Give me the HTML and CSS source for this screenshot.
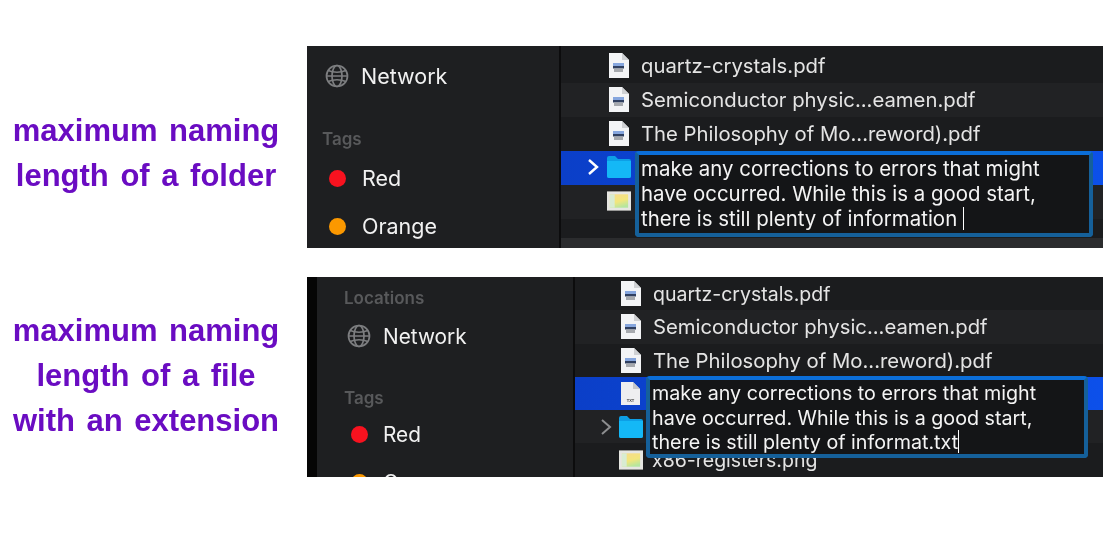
FILE: index.html
```html
<!DOCTYPE html>
<html>
<head>
	<meta charset="UTF-8">
	<title>Maximum naming length</title>
	<link rel="stylesheet" href="styles.css">
</head>
<body>
	<svg class="defs" width="0" height="0">
		<defs>
			<linearGradient id="picture" x1="0.2" y1="0" x2="0.6" y2="1">
				<stop offset="0" stop-color="#f6dc8a"/>
				<stop offset="0.55" stop-color="#f2e67c"/>
				<stop offset="1" stop-color="#b4e6a0"/>
			</linearGradient>
		</defs>
		<symbol id="pdf" viewBox="0 0 21 25">
			<path d="M1 0H14L21 7V25H1Z" fill="#f3f4f6"/>
			<path d="M14 0L21 7H14Z" fill="#cfd1d4"/>
			<rect x="5" y="10" width="11" height="3" fill="#86a6de"/>
			<rect x="5" y="13" width="11" height="2.5" fill="#2f3f60"/>
			<rect x="6" y="15.5" width="9" height="3.5" fill="#a6a9ae"/>
		</symbol>
		<symbol id="folder" viewBox="0 0 24 22">
			<path d="M0 2Q0 0 2 0H8L11 3H22Q24 3 24 5V20Q24 22 22 22H2Q0 22 0 20Z" fill="#0d9fe6"/>
			<path d="M0 5H24V20Q24 22 22 22H2Q0 22 0 20Z" fill="#14b8f6"/>
		</symbol>
		<symbol id="image" viewBox="0 0 25 20">
			<rect width="25" height="20" fill="#e6e6e2"/>
			<rect x="3" y="3" width="19" height="14" fill="url(#picture)"/>
			<rect x="3" y="3" width="5" height="14" fill="#d8ecd2"/>
		</symbol>
		<symbol id="globe" viewBox="0 0 24 24">
			<g fill="none" stroke="#7d7e80" stroke-width="1.7">
				<circle cx="12" cy="12" r="10.5"/>
				<ellipse cx="12" cy="12" rx="5" ry="10.5"/>
				<path d="M3 6.5Q12 10 21 6.5M1.5 12H22.5M3 17.5Q12 14 21 17.5"/>
			</g>
		</symbol>
	</svg>

	<div class="page">
		<!-- folder -->
		<section class="example example-folder">
			<div class="caption">maximum naming<br>length of a folder</div>
			<div class="panel">
				<div class="sidebar">
					<div class="side-row"><svg class="globe"><use href="#globe"/></svg>Network</div>
					<div class="side-head side-tags">Tags</div>
					<div class="side-row"><span class="dot dot-red"></span>Red</div>
					<div class="side-row"><span class="dot dot-orange"></span>Orange</div>
				</div>
				<div class="files">
					<div class="file"><svg class="icon"><use href="#pdf"/></svg>quartz-crystals.pdf</div>
					<div class="file file-alt"><svg class="icon"><use href="#pdf"/></svg>Semiconductor physic...eamen.pdf</div>
					<div class="file"><svg class="icon"><use href="#pdf"/></svg>The Philosophy of Mo...reword).pdf</div>
					<div class="file file-selected">
						<svg class="chevron" viewBox="0 0 12 18"><path d="M2 2L10 9L2 16" fill="none" stroke="#fff" stroke-width="2.4"/></svg>
						<svg class="icon icon-folder"><use href="#folder"/></svg>
					</div>
					<div class="file file-alt"><svg class="icon icon-image"><use href="#image"/></svg></div>
					<div class="status"></div>
					<div class="rename">make any corrections to errors that might<br>have occurred. While this is a good start,<br>there is still plenty of information <span class="caret"></span></div>
				</div>
			</div>
		</section>

		<!-- file with extension -->
		<section class="example example-file">
			<div class="caption">maximum naming<br>length of a file<br>with an extension</div>
			<div class="panel">
				<div class="sidebar">
					<div class="side-head">Locations</div>
					<div class="side-row"><svg class="globe"><use href="#globe"/></svg>Network</div>
					<div class="side-head side-tags">Tags</div>
					<div class="side-row"><span class="dot dot-red"></span>Red</div>
					<div class="side-row"><span class="dot dot-orange"></span>Orange</div>
				</div>
				<div class="files">
					<div class="file file-small"><svg class="icon"><use href="#pdf"/></svg>quartz-crystals.pdf</div>
					<div class="file file-alt"><svg class="icon"><use href="#pdf"/></svg>Semiconductor physic...eamen.pdf</div>
					<div class="file"><svg class="icon"><use href="#pdf"/></svg>The Philosophy of Mo...reword).pdf</div>
					<div class="file file-selected">
						<svg class="icon icon-txt" viewBox="0 0 19 23">
							<path d="M0 0H12L19 7V23H0Z" fill="#eeeef0"/>
							<path d="M12 0L19 7H12Z" fill="#c6c7ca"/>
							<text x="9.5" y="20" class="txt-label">TXT</text>
						</svg>
					</div>
					<div class="file file-alt">
						<svg class="chevron chevron-dim" viewBox="0 0 12 18"><path d="M2 2L10 9L2 16" fill="none" stroke="#8d8e90" stroke-width="2"/></svg>
						<svg class="icon icon-folder"><use href="#folder"/></svg>
					</div>
					<div class="file file-small"><svg class="icon icon-image"><use href="#image"/></svg>x86-registers.png</div>
					<div class="rename">make any corrections to errors that might<br>have occurred. While this is a good start,<br>there is still plenty of informat.txt<span class="caret"></span></div>
				</div>
			</div>
		</section>
	</div>
</body>
</html>
```

FILE: styles.css
```css
/* Basic styles */
html, body {
	margin: 0;
	background-color: #fff;
}
.defs {
	position: absolute;
}
.page {
	display: flex;
	flex-direction: column;
	gap: 29px;
	padding-top: 46px;
	font-family: "Liberation Sans", Arial, sans-serif;
}
.example {
	display: flex;
	align-items: center;
}
.caption {
	width: 292px;
	margin-right: 15px;
	text-align: center;
	font-size: 31px;
	font-weight: bold;
	line-height: 45px;
	word-spacing: 3px;
	color: #6a0cc2;
	filter: blur(0.3px);
}
.example-folder .caption {
	margin-top: 12px;
}
.example-file .caption {
	margin-top: -4px;
}
.panel {
	display: flex;
	width: 796px;
	overflow: hidden;
	background-color: #1c1d1f;
	color: #f1f1f1;
	font-family: Inter, "Liberation Sans", sans-serif;
	box-shadow: inset 0 1px 0 #111;
	filter: blur(0.4px);
}
.example-folder .panel {
	height: 202px;
}
.example-file .panel {
	height: 200px;
}

/* Sidebar */
.sidebar {
	flex: 0 0 auto;
	box-sizing: border-box;
	border-right: 2px solid #0c0c0d;
	background-color: #1e1f21;
}
.example-folder .sidebar {
	width: 254px;
	padding: 6px 0 0 15px;
}
.example-file .sidebar {
	width: 268px;
	padding: 7px 0 0 27px;
	border-left: 10px solid #050505;
}
.side-row {
	display: flex;
	align-items: center;
	height: 48px;
	font-size: 21.5px;
}
.example-file .side-row {
	font-size: 20.8px;
}
.side-head {
	height: 28px;
	line-height: 28px;
	font-size: 17px;
	font-weight: 600;
	color: #58595b;
}
.side-tags {
	margin-top: 24px;
}
.example-folder .side-tags {
	margin: 25px 0 1px;
}
.example-file .side-tags {
	margin-bottom: -2px;
}
.globe {
	width: 24px;
	height: 24px;
	margin: 0 12px 0 3px;
}
.dot {
	width: 17px;
	height: 17px;
	margin: 0 16px 0 7px;
	border-radius: 50%;
}
.example-file .dot {
	margin-right: 15px;
}
.dot-red {
	background-color: #f8121f;
}
.dot-orange {
	background-color: #fb9800;
}

/* File list */
.files {
	position: relative;
	flex: 1;
	display: flex;
	flex-direction: column;
	background-color: #1b1c1e;
	font-size: 20.3px;
	color: #e4e4e4;
}
.example-folder .files {
	padding-top: 3px;
}
.file {
	position: relative;
	flex: 0 0 auto;
	display: flex;
	align-items: center;
	box-sizing: border-box;
	white-space: nowrap;
}
.example-folder .file {
	height: 34px;
	padding: 0 0 2px 47px;
}
.example-file .file {
	height: 33.25px;
	padding-left: 45px;
}
.example-file .file-small {
	font-size: 19.5px;
}
.file-alt {
	background-color: #212224;
}
.file-selected {
	background: linear-gradient(90deg, #0b3fc8, #0c50ea);
}
.icon {
	flex: 0 0 auto;
	width: 21px;
	height: 25px;
	margin-right: 12px;
}
.icon-folder,
.icon-image {
	width: 24px;
	height: 22px;
	margin-left: -1px;
}
.example-file .icon-folder,
.example-file .icon-image {
	margin-right: 9px;
}
.icon-txt {
	width: 19px;
	height: 23px;
	margin-left: 1px;
}
.txt-label {
	font-family: "Liberation Sans", sans-serif;
	font-size: 4px;
	font-weight: bold;
	fill: #444;
	text-anchor: middle;
}
.chevron {
	position: absolute;
	left: 26px;
	width: 12px;
	height: 18px;
}
.chevron-dim {
	left: 25px;
}
.status {
	flex: 1;
	margin-top: 19px;
	background-color: #2b2c2e;
}

/* Rename box over the list */
.rename {
	position: absolute;
	box-sizing: border-box;
	border: 4px solid #15609a;
	border-top-color: #0b6ed8;
	border-radius: 4px;
	background-color: #141517;
	color: #f4f4f4;
	white-space: nowrap;
}
.example-folder .rename {
	left: 74px;
	top: 105px;
	width: 458px;
	height: 86px;
	padding: 1px 0 0 2px;
	font-size: 20.45px;
	line-height: 25px;
}
.example-file .rename {
	left: 71px;
	top: 99px;
	width: 442px;
	height: 82px;
	padding: 1px 0 0 2px;
	font-size: 19.7px;
	line-height: 24.5px;
}
.caret {
	display: inline-block;
	width: 1px;
	height: 23px;
	margin-bottom: -4px;
	background-color: #fff;
}
```
